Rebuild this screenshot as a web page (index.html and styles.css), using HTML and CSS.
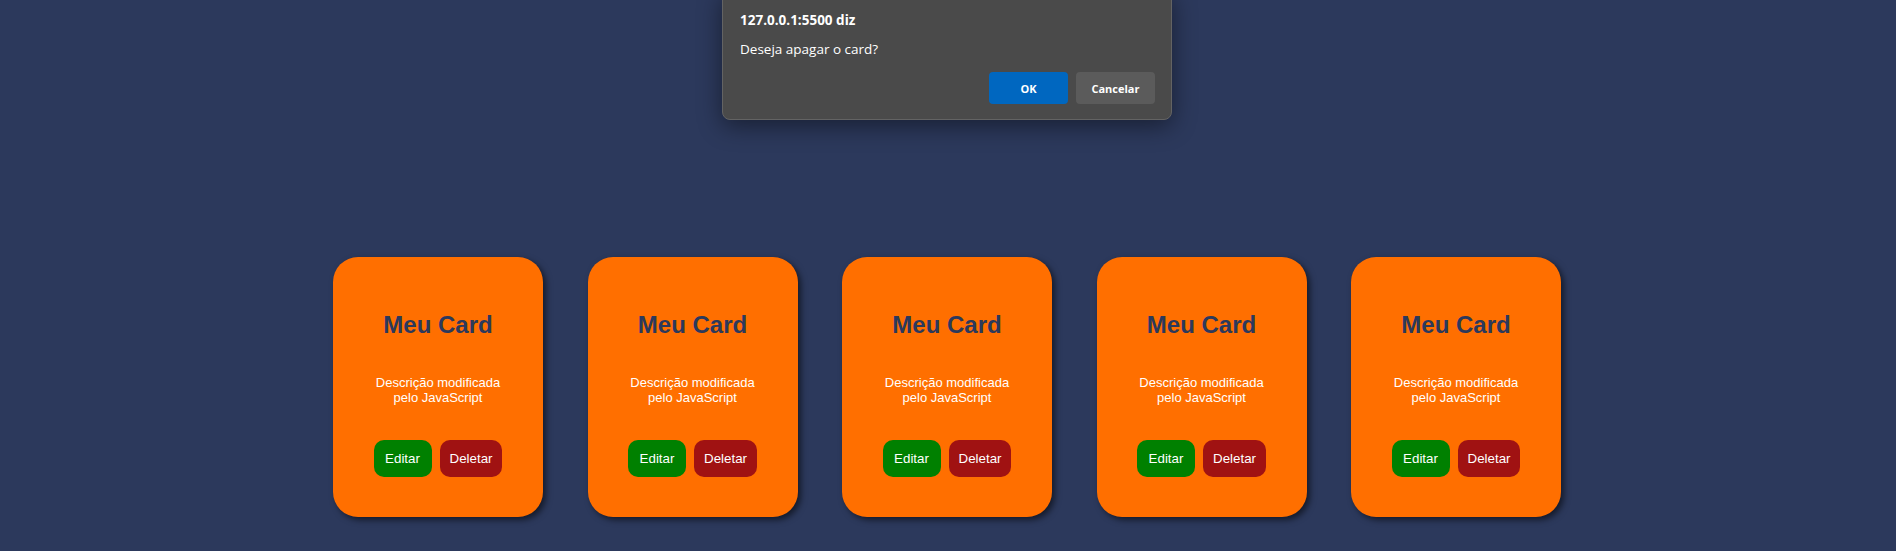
FILE: index.html
```html
<!DOCTYPE html>
<html lang="pt-BR">
<head>
<meta charset="utf-8">
<title>Cards</title>
<link rel="stylesheet" href="styles.css">
</head>
<body>
<div class="dialog">
  <div class="dialog-title">127.0.0.1:5500 diz</div>
  <div class="dialog-msg">Deseja apagar o card?</div>
  <div class="dialog-actions">
    <button class="dbtn dbtn-ok">OK</button>
    <button class="dbtn dbtn-cancel">Cancelar</button>
  </div>
</div>
<main class="cards">
  <div class="card">
    <h2 class="card-title">Meu Card</h2>
    <p class="card-desc">Descrição modificada pelo JavaScript</p>
    <div class="card-actions"><button class="btn btn-edit">Editar</button><button class="btn btn-del">Deletar</button></div>
  </div>
  <div class="card">
    <h2 class="card-title">Meu Card</h2>
    <p class="card-desc">Descrição modificada pelo JavaScript</p>
    <div class="card-actions"><button class="btn btn-edit">Editar</button><button class="btn btn-del">Deletar</button></div>
  </div>
  <div class="card">
    <h2 class="card-title">Meu Card</h2>
    <p class="card-desc">Descrição modificada pelo JavaScript</p>
    <div class="card-actions"><button class="btn btn-edit">Editar</button><button class="btn btn-del">Deletar</button></div>
  </div>
  <div class="card">
    <h2 class="card-title">Meu Card</h2>
    <p class="card-desc">Descrição modificada pelo JavaScript</p>
    <div class="card-actions"><button class="btn btn-edit">Editar</button><button class="btn btn-del">Deletar</button></div>
  </div>
  <div class="card">
    <h2 class="card-title">Meu Card</h2>
    <p class="card-desc">Descrição modificada pelo JavaScript</p>
    <div class="card-actions"><button class="btn btn-edit">Editar</button><button class="btn btn-del">Deletar</button></div>
  </div>
</main>
</body>
</html>
```

FILE: styles.css
```css
html, body {
  margin: 0;
  padding: 0;
}
body {
  background: #2c395c;
  font-family: "Liberation Sans", Arial, sans-serif;
  min-height: 551px;
  overflow: hidden;
}
.cards {
  display: flex;
  justify-content: center;
  gap: 44.5px;
  padding-top: 257px;
  padding-right: 2px;
}
.card {
  width: 210px;
  height: 260px;
  box-sizing: border-box;
  background: #ff6f00;
  border-radius: 25px;
  box-shadow: 3px 3px 6px rgba(0, 0, 0, 0.55);
  display: flex;
  flex-direction: column;
  align-items: center;
  padding-top: 54px;
  text-align: center;
}
.card-title {
  margin: 0;
  font-size: 24px;
  line-height: 27px;
  font-weight: bold;
  color: #2c395c;
}
.card-desc {
  margin: 37px 0 0;
  width: 140px;
  font-size: 13px;
  line-height: 15px;
  color: #ffffff;
}
.card-actions {
  margin-top: 35px;
  display: flex;
  gap: 8px;
}
.btn {
  border: none;
  border-radius: 10px;
  padding: 11px 10px;
  min-width: 58px;
  font-family: "Liberation Sans", Arial, sans-serif;
  font-size: 13.33px;
  line-height: 15px;
  color: #ffffff;
}
.btn-edit {
  background: #008000;
}
.btn-del {
  background: #a01212;
}
.dialog {
  position: absolute;
  top: -10px;
  left: 722px;
  width: 450px;
  box-sizing: border-box;
  padding: 20px 16px 15px 17px;
  background: #4a4a4a;
  border: 1px solid #636363;
  border-radius: 8px;
  box-shadow: 0 6px 24px rgba(0, 0, 0, 0.45);
  font-family: "Open Sans", "Noto Sans", sans-serif;
  color: #ffffff;
}
.dialog-title {
  font-size: 13.5px;
  font-weight: bold;
  line-height: 19px;
}
.dialog-msg {
  margin-top: 10px;
  font-size: 13.5px;
  line-height: 19px;
}
.dialog-actions {
  margin-top: 13px;
  display: flex;
  justify-content: flex-end;
  gap: 8px;
}
.dbtn {
  width: 79px;
  height: 32px;
  border: none;
  border-radius: 4px;
  font-family: "Open Sans", "Noto Sans", sans-serif;
  font-size: 11px;
  font-weight: bold;
  color: #ffffff;
}
.dbtn-ok {
  background: #0067c0;
}
.dbtn-cancel {
  background: #5b5b5b;
}
```
